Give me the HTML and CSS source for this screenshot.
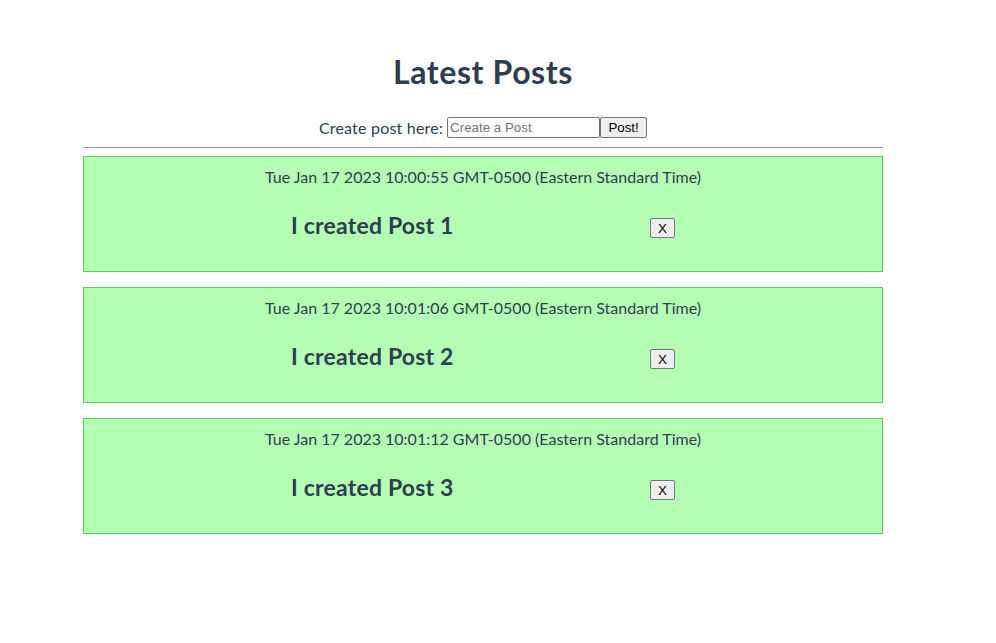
FILE: index.html
```html
<!DOCTYPE html>
<html>
<head>
<meta charset="utf-8">
<link rel="stylesheet" href="styles.css">
</head>
<body>
<div class="app">
  <h1 class="title">Latest Posts</h1>
  <div class="create">
    <label class="create-label">Create post here:</label><input class="create-input" type="text" placeholder="Create a Post"><button class="create-btn">Post!</button>
  </div>
  <hr class="divider">
  <div class="posts">
    <div class="post">
      <div class="post-date">Tue Jan 17 2023 10:00:55 GMT-0500 (Eastern Standard Time)</div>
      <div class="post-row">
        <h3 class="post-title">I created Post 1</h3>
        <button class="post-del">X</button>
      </div>
    </div>
    <div class="post">
      <div class="post-date">Tue Jan 17 2023 10:01:06 GMT-0500 (Eastern Standard Time)</div>
      <div class="post-row">
        <h3 class="post-title">I created Post 2</h3>
        <button class="post-del">X</button>
      </div>
    </div>
    <div class="post">
      <div class="post-date">Tue Jan 17 2023 10:01:12 GMT-0500 (Eastern Standard Time)</div>
      <div class="post-row">
        <h3 class="post-title">I created Post 3</h3>
        <button class="post-del">X</button>
      </div>
    </div>
  </div>
</div>
</body>
</html>
```
FILE: styles.css
```css
html, body {
  margin: 0;
  padding: 0;
  background: #ffffff;
}
.app {
  width: 966px;
  font-family: Lato, "Open Sans", sans-serif;
  color: #2c3e50;
  text-align: center;
  padding-top: 52px;
}
.title {
  margin: 0;
  font-size: 32px;
  line-height: 40px;
  font-weight: 700;
  letter-spacing: 0.6px;
}
.create {
  margin-top: 24px;
  display: flex;
  justify-content: center;
  align-items: center;
  height: 22px;
}
.create-label {
  font-size: 16px;
  margin-right: 4px;
  letter-spacing: 0.2px;
}
.create-input {
  box-sizing: border-box;
  width: 153px;
  height: 21px;
  font-family: Arial, "Liberation Sans", sans-serif;
  font-size: 13.33px;
  padding: 1px 2px;
  border: 1px solid #767676;
  border-radius: 2px;
  margin: 0;
}
.create-input::placeholder {
  color: #757575;
}
.create-btn {
  box-sizing: border-box;
  height: 21px;
  width: 47px;
  font-family: Arial, "Liberation Sans", sans-serif;
  font-size: 13.33px;
  color: #000;
  background: #efefef;
  border: 1px solid #767676;
  border-radius: 2px;
  padding: 0 4px;
  margin: 0;
}
.divider {
  width: 800px;
  margin: 9px auto 8px;
  border: none;
  border-top: 1px solid #9a9a9a;
  height: 0;
}
.posts {
  width: 800px;
  margin: 0 auto;
  display: flex;
  flex-direction: column;
  gap: 15px;
}
.post {
  box-sizing: border-box;
  height: 116px;
  background: #b4ffb4;
  border: 1px solid #5ccd5c;
  padding-top: 10px;
}
.post-date {
  font-size: 16px;
  line-height: 20px;
  letter-spacing: 0;
}
.post-row {
  margin-top: 23px;
  display: flex;
  justify-content: center;
  align-items: center;
  gap: 199px;
}
.post-title {
  margin: 0;
  width: 160px;
  font-size: 23px;
  line-height: 30px;
  font-weight: 700;
  letter-spacing: 0.2px;
  white-space: nowrap;
}
.post-del {
  box-sizing: border-box;
  width: 25px;
  height: 20px;
  margin-top: 6px;
  font-family: Arial, "Liberation Sans", sans-serif;
  font-size: 13.33px;
  color: #000;
  background: #efefef;
  border: 1px solid #767676;
  border-radius: 2px;
  padding: 0;
}
```
